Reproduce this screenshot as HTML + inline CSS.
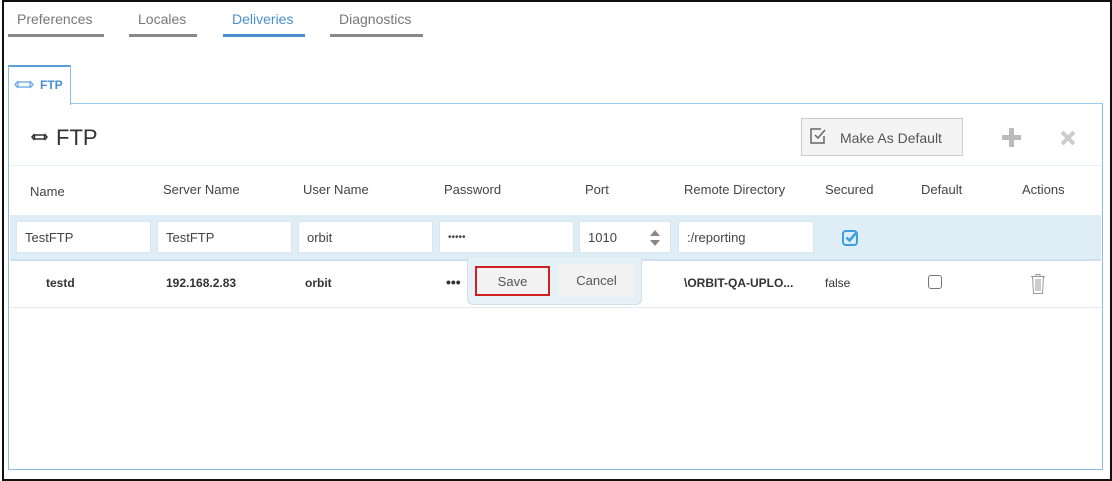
<!DOCTYPE html>
<html><head><style>
*{margin:0;padding:0;box-sizing:border-box}
body{width:1112px;height:481px;background:#fff;font-family:"Liberation Sans",sans-serif;position:relative;overflow:hidden;color:#333}
.a{position:absolute}
.frame{left:2px;top:0;width:1110px;height:481px;border:2px solid #111}
.tab{font-size:14px;color:#777;top:11px}
.ul{height:3px;background:#888;top:34px}
.inp{position:absolute;top:221px;height:32px;background:#fff;border:1px solid #d8e6f0;font-size:13px;color:#444;padding:8px 0 0 8px}
.hd{position:absolute;font-size:13px;color:#444}
.dt{position:absolute;font-size:12px;font-weight:bold;color:#333;top:276px}
</style></head><body>
<div class="a frame"></div>
<div class="a tab" style="left:17px">Preferences</div>
<div class="a tab" style="left:138px">Locales</div>
<div class="a tab" style="left:232px;color:#4a90d0">Deliveries</div>
<div class="a tab" style="left:339px">Diagnostics</div>
<div class="a ul" style="left:8px;width:96px"></div>
<div class="a ul" style="left:129px;width:68px"></div>
<div class="a ul" style="left:223px;width:82px;background:#4a90d0"></div>
<div class="a ul" style="left:330px;width:93px"></div>

<div class="a" style="left:8px;top:103px;width:1095px;height:367px;border:1px solid #8bbde6;border-top:1px solid #9ec9ec"></div>
<div class="a" style="left:8px;top:65px;width:63px;height:40px;background:#fff;border:1px solid #8bbde6;border-top:2px solid #5a9fdc;border-bottom:none"></div>
<svg class="a" style="left:14px;top:80px" width="20" height="9" viewBox="0 0 20 9" fill="none" stroke="#7ab3e6" stroke-width="1.5"><path d="M4 1L1 4.5 4 8M16 1l3 3.5L16 8M4 2h12v5H4z"/></svg>
<div class="a" style="left:40px;top:78px;font-size:12px;font-weight:bold;color:#4a90d0">FTP</div>
<svg class="a" style="left:31px;top:133px" width="17" height="8" viewBox="0 0 17 8" fill="none" stroke="#333" stroke-width="1.5"><path d="M3.5 1L1 4l2.5 3M13.5 1L16 4l-2.5 3M3.5 2h10v4h-10z"/></svg>
<div class="a" style="left:56px;top:125px;font-size:22px;color:#333">FTP</div>

<div class="a" style="left:801px;top:118px;width:162px;height:38px;background:#f4f4f4;border:1px solid #ccc;font-size:14px;color:#555;padding:11px 0 0 38px">Make As Default</div>
<svg class="a" style="left:810px;top:127px" width="19" height="18" viewBox="0 0 19 18" fill="none" stroke="#666" stroke-width="1.5"><path d="M14 9v7H1V2h10"/><path d="M5 8l3 3 7-8"/></svg>
<svg class="a" style="left:1002px;top:128px" width="19" height="19" viewBox="0 0 19 19"><path d="M7 0h5v7h7v5h-7v7H7v-7H0V7h7z" fill="#bbb"/></svg>
<svg class="a" style="left:1060px;top:130px" width="16" height="16" viewBox="0 0 16 16" stroke="#ccc" stroke-width="4"><path d="M2 2l12 12M14 2L2 14"/></svg>

<div class="a" style="left:10px;top:165px;width:1091px;height:1px;background:#e8eef2"></div>
<div class="hd" style="left:30px;top:184px">Name</div>
<div class="hd" style="left:163px;top:182px">Server Name</div>
<div class="hd" style="left:303px;top:182px">User Name</div>
<div class="hd" style="left:444px;top:182px">Password</div>
<div class="hd" style="left:585px;top:182px">Port</div>
<div class="hd" style="left:684px;top:182px">Remote Directory</div>
<div class="hd" style="left:825px;top:182px">Secured</div>
<div class="hd" style="left:921px;top:182px">Default</div>
<div class="hd" style="left:1022px;top:182px">Actions</div>

<div class="a" style="left:10px;top:215px;width:1091px;height:46px;background:#deedf6;border-bottom:2px solid #cfe0ec"></div>
<div class="inp" style="left:16px;width:135px">TestFTP</div>
<div class="inp" style="left:157px;width:135px">TestFTP</div>
<div class="inp" style="left:298px;width:135px">orbit</div>
<div class="inp" style="left:439px;width:135px;font-size:10px;padding-top:10px">•••••</div>
<div class="inp" style="left:579px;width:92px">1010</div>
<svg class="a" style="left:649px;top:229px" width="12" height="18" viewBox="0 0 12 18" fill="#888"><path d="M1 7l5-6 5 6zM1 11l5 6 5-6z"/></svg>
<div class="inp" style="left:678px;width:136px">:/reporting</div>
<svg class="a" style="left:842px;top:229px" width="18" height="17" viewBox="0 0 18 17" fill="none"><rect x="1" y="2" width="14" height="14" rx="3" stroke="#3aa0e0" stroke-width="2"/><path d="M4.5 8.5l3 3 7-8" stroke="#3aa0e0" stroke-width="2.5"/></svg>

<div class="dt" style="left:46px">testd</div>
<div class="dt" style="left:166px">192.168.2.83</div>
<div class="dt" style="left:305px">orbit</div>
<div class="dt" style="left:446px;font-size:14px;top:274px">•••</div>
<div class="dt" style="left:684px">\ORBIT-QA-UPLO...</div>
<div class="dt" style="left:825px;font-weight:normal">false</div>
<div class="a" style="left:928px;top:275px;width:14px;height:14px;border:1px solid #777;border-radius:3px"></div>
<svg class="a" style="left:1030px;top:273px" width="16" height="22" viewBox="0 0 16 22" fill="none" stroke="#999" stroke-width="1"><path d="M1 3.5h14M6 3.5V1.5h4v2M2.5 3.5l1 17h9l1-17M6 6v12M8 6v12M10 6v12"/></svg>
<div class="a" style="left:10px;top:307px;width:1091px;height:1px;background:#e6eaee"></div>

<div class="a" style="left:467px;top:258px;width:175px;height:47px;background:#e6f0f7;border:1px solid #cfe0ec;border-top:none;border-radius:0 0 6px 6px"></div>
<div class="a" style="left:475px;top:266px;width:75px;height:30px;background:#f2f2f2;border:2px solid #d02020;font-size:13px;color:#555;text-align:center;padding-top:6px">Save</div>
<div class="a" style="left:558px;top:265px;width:77px;height:32px;background:#f2f2f2;font-size:13px;color:#555;text-align:center;padding-top:8px">Cancel</div>
</body></html>
